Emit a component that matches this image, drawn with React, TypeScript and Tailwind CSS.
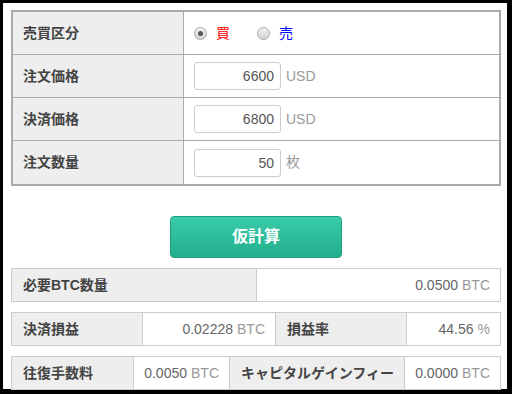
import React, { useState } from "react"

const font = "font-['Liberation_Sans','Noto_Sans_CJK_JP',sans-serif]"

const Radio = ({ checked, onClick }: { checked: boolean; onClick: () => void }) => (
  <span
    onClick={onClick}
    className="flex h-[13px] w-[13px] cursor-pointer items-center justify-center rounded-full border border-[#a8a8a8] bg-gradient-to-b from-[#f2f2f2] to-[#d4d4d4]"
  >
    {checked && <span className="h-[5px] w-[5px] rounded-full bg-[#555]" />}
  </span>
)

const FormRow = ({ label, children, last }: { label: string; children: React.ReactNode; last?: boolean }) => (
  <div className={`flex h-[43px] ${last ? "" : "border-b border-[#aaa]"}`}>
    <div className="flex w-[171px] items-center border-r border-[#aaa] bg-[#eee] pl-[10px] text-[14px] font-bold text-[#444]">
      {label}
    </div>
    <div className="flex flex-1 items-center pl-[10px]">{children}</div>
  </div>
)

const NumInput = ({ value, unit }: { value: string; unit: string }) => {
  const [v, setV] = useState(value)
  return (
    <>
      <input
        value={v}
        onChange={(e) => setV(e.target.value)}
        className="h-[28px] w-[87px] rounded-[3px] border border-[#ccc] pr-[6px] text-right text-[14px] text-[#555] outline-none"
      />
      <span className="ml-[5px] text-[14px] text-[#999]">{unit}</span>
    </>
  )
}

const Label = ({ w, text, first }: { w?: string; text: string; first?: boolean }) => (
  <div
    className={`flex items-center bg-[#eee] pl-[11px] text-[14px] font-bold text-[#444] ${w ?? ""} ${
      first ? "" : "border-l border-[#ccc]"
    }`}
  >
    {text}
  </div>
)

const Value = ({ w, num, unit }: { w?: string; num: string; unit: string }) => (
  <div className={`flex items-center justify-end border-l border-[#ccc] pr-[10px] text-[14px] ${w ?? "flex-1"}`}>
    <span className="text-[#666]">{num}</span>
    <span className="ml-[4px] text-[#999]">{unit}</span>
  </div>
)

export default function App() {
  const [side, setSide] = useState<"buy" | "sell">("buy")

  return (
    <div className={`h-[394px] w-[512px] overflow-hidden ${font}`}>
      <div className="h-full w-full border-t-[3px] border-r-[5px] border-b-[5px] border-l-[3px] border-black bg-white pt-[7px] pl-[8px]">
        <div className="w-[490px] border-2 border-[#aaa]">
          <FormRow label="売買区分">
            <div className="flex items-center">
              <Radio checked={side === "buy"} onClick={() => setSide("buy")} />
              <span className="ml-[9px] text-[14px] text-[#f00]">買</span>
              <span className="ml-[27px]">
                <Radio checked={side === "sell"} onClick={() => setSide("sell")} />
              </span>
              <span className="ml-[9px] text-[14px] text-[#00f]">売</span>
            </div>
          </FormRow>
          <FormRow label="注文価格">
            <NumInput value="6600" unit="USD" />
          </FormRow>
          <FormRow label="決済価格">
            <NumInput value="6800" unit="USD" />
          </FormRow>
          <FormRow label="注文数量" last>
            <NumInput value="50" unit="枚" />
          </FormRow>
        </div>

        <div className="mt-[30px] flex w-[490px] justify-center">
          <button className="h-[42px] w-[172px] rounded-[4px] border border-[#1f9d7f] bg-gradient-to-b from-[#39cca9] to-[#22ae8c] text-[16px] font-bold text-white">
            仮計算
          </button>
        </div>

        <div className="mt-[10px] flex h-[34px] w-[490px] border border-[#ccc]">
          <Label w="w-[244px]" text="必要BTC数量" first />
          <Value num="0.0500" unit="BTC" />
        </div>

        <div className="mt-[10px] flex h-[34px] w-[490px] border border-[#ccc]">
          <Label w="w-[130px]" text="決済損益" first />
          <Value w="w-[133px]" num="0.02228" unit="BTC" />
          <Label w="w-[131px]" text="損益率" />
          <Value num="44.56" unit="%" />
        </div>

        <div className="mt-[10px] flex h-[34px] w-[490px] border border-[#ccc]">
          <Label w="w-[121px]" text="往復手数料" first />
          <Value w="w-[96px]" num="0.0050" unit="BTC" />
          <Label w="w-[175px]" text="キャピタルゲインフィー" />
          <Value num="0.0000" unit="BTC" />
        </div>
      </div>
    </div>
  )
}
